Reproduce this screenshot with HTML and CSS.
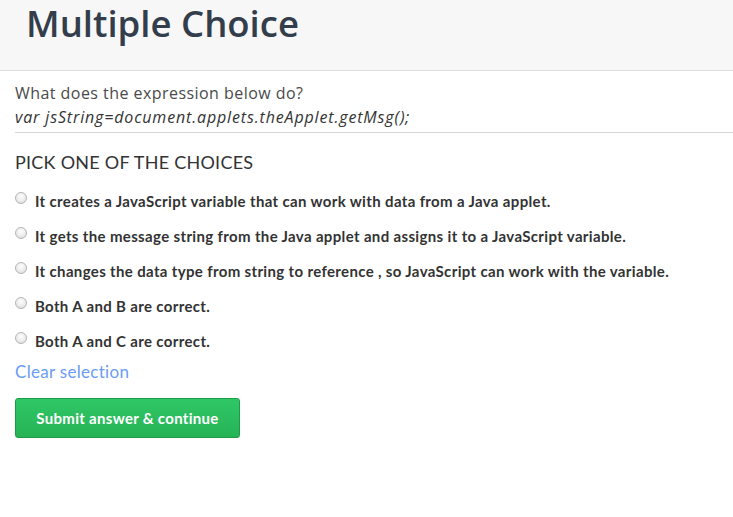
FILE: index.html
```html
<!DOCTYPE html>
<html>
<head>
<meta charset="utf-8">
<link rel="stylesheet" href="styles.css">
</head>
<body>
<header class="page-header">
  <h1 class="title">Multiple Choice</h1>
</header>
<main class="content">
  <div class="question">
    <p class="prompt">What does the expression below do?</p>
    <p class="code">var jsString=document.applets.theApplet.getMsg();</p>
  </div>
  <h2 class="pick">PICK ONE OF THE CHOICES</h2>
  <form class="choices">
    <label class="choice"><input type="radio" name="c" class="radio"><span>It creates a JavaScript variable that can work with data from a Java applet.</span></label>
    <label class="choice"><input type="radio" name="c" class="radio"><span>It gets the message string from the Java applet and assigns it to a JavaScript variable.</span></label>
    <label class="choice"><input type="radio" name="c" class="radio"><span>It changes the data type from string to reference , so JavaScript can work with the variable.</span></label>
    <label class="choice"><input type="radio" name="c" class="radio"><span>Both A and B are correct.</span></label>
    <label class="choice"><input type="radio" name="c" class="radio"><span>Both A and C are correct.</span></label>
  </form>
  <a class="clear" href="#">Clear selection</a>
  <button class="submit" type="button">Submit answer &amp; continue</button>
</main>
</body>
</html>
```
FILE: styles.css
```css
html, body {
  margin: 0;
  padding: 0;
  background: #fff;
}
body {
  font-family: Lato, "Open Sans", sans-serif;
  color: #333;
}
.page-header {
  background: #f7f7f7;
  border-bottom: 1px solid #dcdcdc;
  height: 71px;
  box-sizing: border-box;
  padding-left: 26px;
}
.title {
  margin: 0;
  font-family: "Open Sans", sans-serif;
  font-weight: 600;
  font-size: 36.5px;
  line-height: 46px;
  color: #333d4b;
}
.content {
  padding-left: 15px;
}
.question {
  border-bottom: 1px solid #d6d6d6;
  padding: 10px 0 3px;
}
.prompt, .code {
  margin: 0;
  font-family: "Open Sans", sans-serif;
  font-size: 16px;
  line-height: 24px;
  color: #4a4a4a;
  letter-spacing: 0.45px;
}
.code {
  font-style: italic;
  color: #333;
  letter-spacing: 0.85px;
}
.pick {
  margin: 17px 0 0;
  font-family: Lato, sans-serif;
  font-weight: 400;
  font-size: 18px;
  line-height: 24px;
  color: #333;
  letter-spacing: 0.25px;
}
.choices {
  display: flex;
  flex-direction: column;
  margin-top: 17px;
}
.choice {
  display: flex;
  align-items: flex-start;
  height: 35px;
  font-family: Lato, sans-serif;
  font-weight: 700;
  font-size: 15px;
  line-height: 20px;
  color: #333;
  letter-spacing: 0.35px;
}
.radio {
  appearance: none;
  -webkit-appearance: none;
  width: 12px;
  height: 12px;
  margin: 1px 8px 0 0;
  border-radius: 50%;
  border: 1px solid #b5b5b5;
  background: radial-gradient(circle at 50% 35%, #fdfdfd 0%, #ececec 55%, #d4d4d4 100%);
  box-sizing: border-box;
  flex: none;
}
.clear {
  display: block;
  margin-top: -5px;
  font-family: Lato, sans-serif;
  font-size: 17px;
  line-height: 22px;
  color: #6b9cf5;
  text-decoration: none;
  letter-spacing: 0.3px;
}
.submit {
  display: block;
  margin-top: 15px;
  width: 225px;
  height: 40px;
  border: 1px solid #1f9a48;
  border-radius: 3px;
  background: linear-gradient(#2fc766, #26b355);
  color: #fff;
  font-family: Lato, sans-serif;
  font-weight: 700;
  font-size: 15px;
  letter-spacing: 0.3px;
  box-shadow: 0 1px 1px rgba(0,0,0,0.15);
  padding: 0;
}
```
